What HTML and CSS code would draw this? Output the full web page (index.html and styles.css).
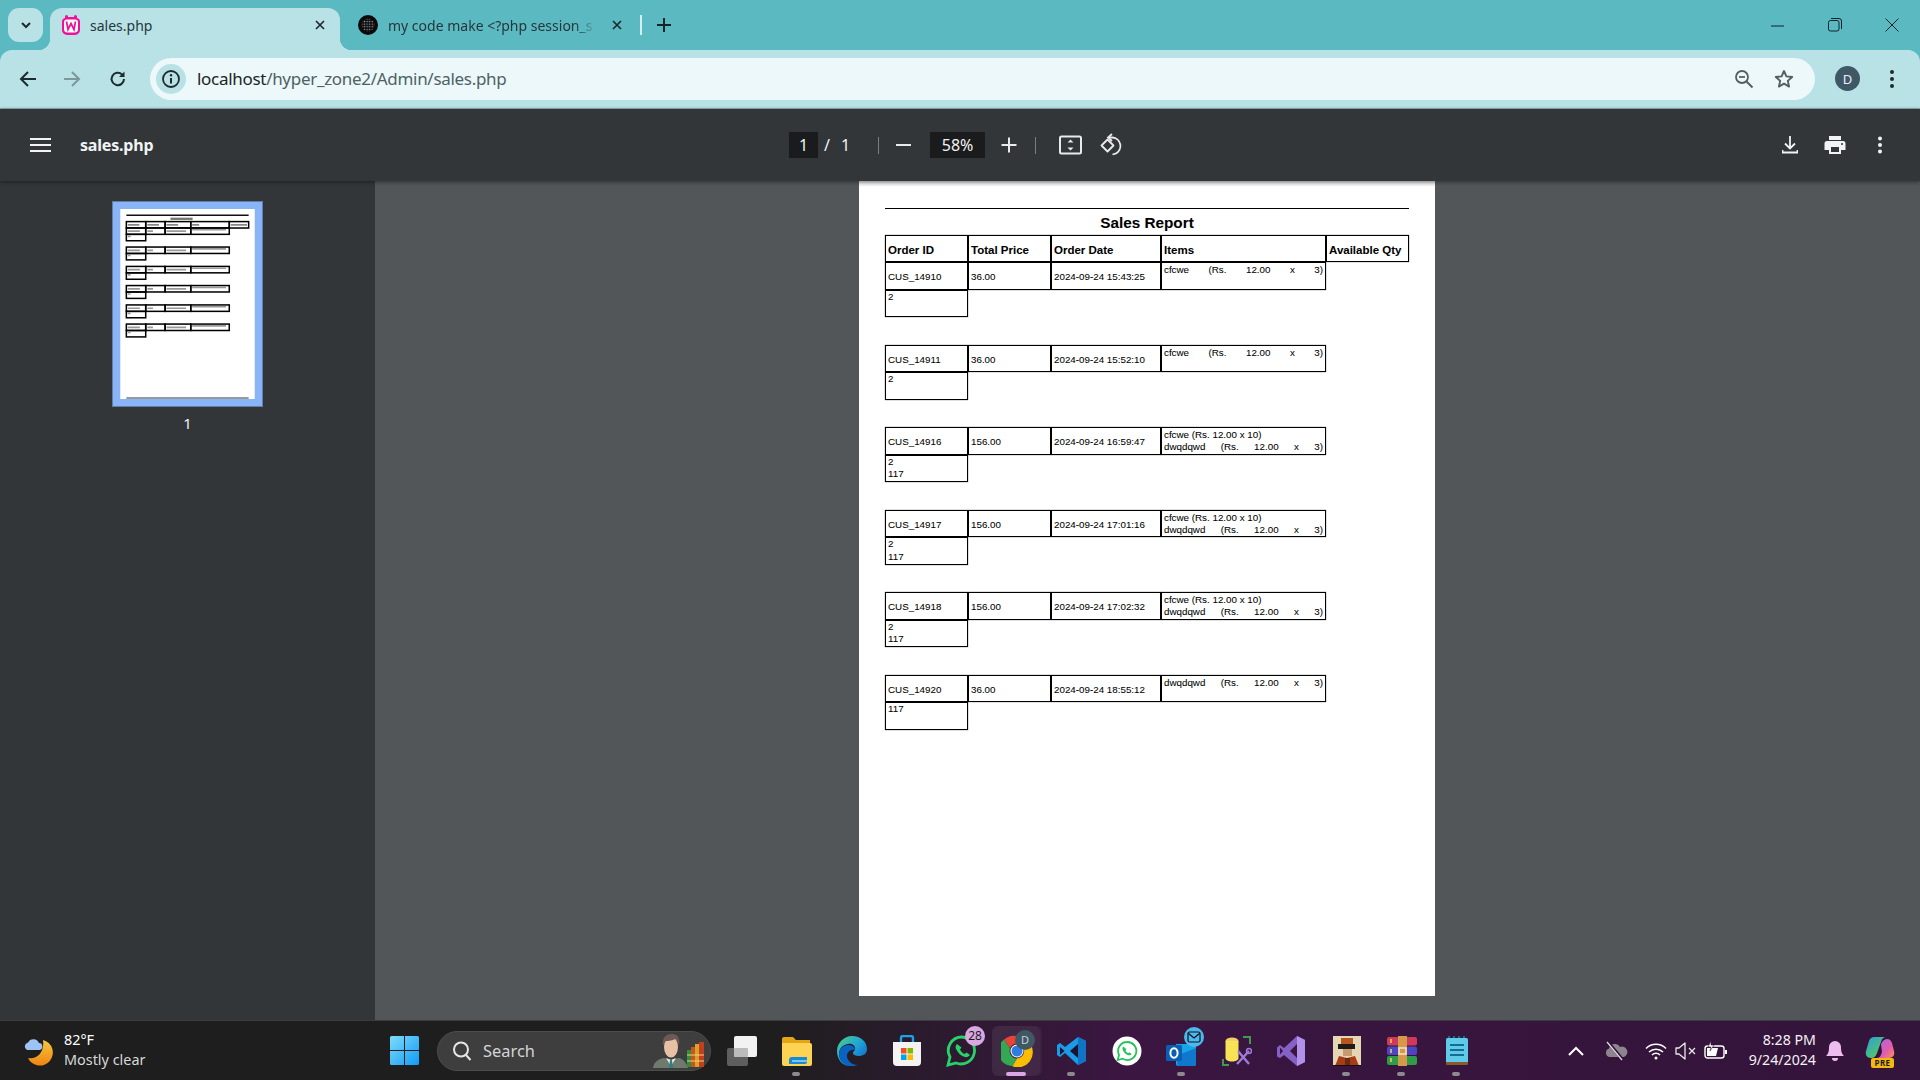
FILE: index.html
```html
<!DOCTYPE html>
<html lang="en">
<head>
<meta charset="utf-8">
<title>sales.php</title>
<link rel="stylesheet" href="styles.css">
</head>
<body>
<div class="window">
  <header class="tabstrip">
    <button class="tab-search"><svg width="14" height="14" viewBox="0 0 14 14"><path d="M3 5l4 4 4-4" fill="none" stroke="#1d2b2e" stroke-width="2"/></svg></button>
    <div class="tab tab-active">
      <svg class="favicon" width="20" height="22" viewBox="0 0 20 22"><path d="M4 4V2.500a1.500 1.500 0 0 1 3 0V3h6v-.5a1.500 1.500 0 0 1 3 0V4a4 4 0 0 1 3 4v8a5 5 0 0 1-5 5H6a5 5 0 0 1-5-5V8a4 4 0 0 1 3-4z" fill="#f0109a"/><path d="M6 5.500h8a3 3 0 0 1 3 3V15a3.500 3.500 0 0 1-3.500 3.500h-7A3.500 3.500 0 0 1 3 15V8.500a3 3 0 0 1 3-3z" fill="#fff"/><path d="M5.500 7.500l1.500 8 3-6 3 6 1.500-8" fill="none" stroke="#f0109a" stroke-width="1.700"/></svg>
      <span class="tab-title">sales.php</span>
      <svg class="tab-x" width="12" height="12" viewBox="0 0 12 12"><path d="M2 2l8 8M10 2l-8 8" stroke="#1d2b2e" stroke-width="1.700"/></svg>
    </div>
    <div class="tab tab-idle">
      <svg class="favicon" width="20" height="20" viewBox="0 0 20 20"><defs><pattern id="dots" width="2.600" height="2.600" patternUnits="userSpaceOnUse"><circle cx="1.300" cy="1.300" r=".75" fill="#9a9a9a"/></pattern></defs><circle cx="10" cy="10" r="10" fill="#0a0a0a"/><circle cx="10" cy="10" r="6.500" fill="url(#dots)"/></svg>
      <span class="tab-title tab-fade">my code make &lt;?php session_s</span>
      <svg class="tab-x" width="12" height="12" viewBox="0 0 12 12"><path d="M2 2l8 8M10 2l-8 8" stroke="#1d2b2e" stroke-width="1.700"/></svg>
    </div>
    <span class="tab-sep"></span>
    <svg class="tab-new" width="16" height="16" viewBox="0 0 16 16"><path d="M8 1v14M1 8h14" stroke="#12262a" stroke-width="2"/></svg>
    <div class="winctl">
      <svg width="14" height="14" viewBox="0 0 14 14"><path d="M0 8h13" stroke="#10222a" stroke-width="1"/></svg>
      <svg width="14" height="14" viewBox="0 0 14 14"><rect x=".5" y="2.500" width="10.500" height="10.500" rx="2" fill="none" stroke="#10222a"/><path d="M3 .5h8a2.500 2.500 0 0 1 2.500 2.500v8" fill="none" stroke="#10222a"/></svg>
      <svg width="14" height="14" viewBox="0 0 14 14"><path d="M.5.500l13 13M13.500.500l-13 13" stroke="#10222a" stroke-width="1"/></svg>
    </div>
  </header>

  <nav class="toolbar">
    <button class="nav"><svg width="20" height="20" viewBox="0 0 20 20"><path d="M18 10H3M10 3l-7 7 7 7" fill="none" stroke="#1d2b2e" stroke-width="2"/></svg></button>
    <button class="nav"><svg width="20" height="20" viewBox="0 0 20 20"><path d="M2 10h15M10 3l7 7-7 7" fill="none" stroke="#7f979b" stroke-width="2"/></svg></button>
    <button class="nav nav-reload"><svg width="20" height="20" viewBox="0 0 20 20"><path d="M16 10a6.200 6.200 0 1 1-2-4.600" fill="none" stroke="#1d2b2e" stroke-width="2"/><path d="M16.500 2.500v5.500h-5.500z" fill="#1d2b2e"/></svg></button>
    <div class="omnibox">
      <span class="info"><svg width="20" height="20" viewBox="0 0 20 20"><circle cx="10" cy="10" r="8" fill="none" stroke="#1d2b2e" stroke-width="1.800"/><path d="M10 9v5.500" stroke="#1d2b2e" stroke-width="2"/><circle cx="10" cy="6.300" r="1.200" fill="#1d2b2e"/></svg></span>
      <span class="url"><span class="url-host">localhost</span>/hyper_zone2/Admin/sales.php</span>
      <svg class="omni-zoom" width="20" height="20" viewBox="0 0 20 20"><circle cx="8" cy="8" r="6" fill="none" stroke="#555f62" stroke-width="1.800"/><path d="M5 8h6" stroke="#555f62" stroke-width="1.800"/><path d="M12.500 12.500l6 6" stroke="#555f62" stroke-width="2"/></svg>
      <svg class="omni-star" width="20" height="20" viewBox="0 0 20 20"><path d="M10 2l2.400 5.400 5.800.6-4.400 3.900 1.300 5.700-5.100-3-5.100 3 1.300-5.700L1.800 8l5.800-.6z" fill="none" stroke="#555f62" stroke-width="1.900" stroke-linejoin="round"/></svg>
    </div>
    <span class="avatar">D</span>
    <svg class="chrome-menu" width="6" height="20" viewBox="0 0 6 20"><circle cx="3" cy="3" r="2" fill="#1d2b2e"/><circle cx="3" cy="10" r="2" fill="#1d2b2e"/><circle cx="3" cy="17" r="2" fill="#1d2b2e"/></svg>
  </nav>

  <section class="pdfbar">
    <div class="pdf-left">
      <svg width="22" height="16" viewBox="0 0 22 16"><path d="M0 2h21M0 8h21M0 14h21" stroke="#f1f3f4" stroke-width="2"/></svg>
      <span class="pdf-name">sales.php</span>
    </div>
    <div class="pdf-center">
      <span class="pdf-field pdf-page">1</span>
      <span class="pdf-slash">/</span>
      <span class="pdf-total">1</span>
      <span class="pdf-sep pdf-sep-a"></span>
      <svg class="pdf-minus" width="16" height="16" viewBox="0 0 16 16"><path d="M0 8h15" stroke="#e8eaed" stroke-width="2"/></svg>
      <span class="pdf-field pdf-zoom">58%</span>
      <svg class="pdf-plus" width="16" height="16" viewBox="0 0 16 16"><path d="M8 .5v15M.5 8h15" stroke="#e8eaed" stroke-width="2"/></svg>
      <span class="pdf-sep pdf-sep-b"></span>
      <svg class="pdf-fit" width="24" height="20" viewBox="0 0 24 20"><rect x="1" y="1.500" width="21" height="17" rx="1.500" fill="none" stroke="#e8eaed" stroke-width="2"/><path d="M11.500 4.500l3 3h-6zM11.500 15.500l3-3h-6z" fill="#e8eaed"/></svg>
      <svg class="pdf-rotate" width="24" height="24" viewBox="0 0 24 24"><path d="M8.500 6.500l6 6-6 6-6-6z" fill="none" stroke="#e8eaed" stroke-width="1.800" stroke-linejoin="round"/><path d="M10 4.500h3.500a8.500 8.500 0 0 1 3 16.200l-3 .8" fill="none" stroke="#e8eaed" stroke-width="1.800"/><path d="M13 1l-4 3.500L13 8" fill="none" stroke="#e8eaed" stroke-width="1.800"/></svg>
    </div>
    <div class="pdf-right">
      <svg width="16" height="20" viewBox="0 0 16 20"><path d="M8 1v12M3 8.500l5 5 5-5M.5 15v2.500h15V15" fill="none" stroke="#f1f3f4" stroke-width="1.800"/></svg>
      <svg width="22" height="20" viewBox="0 0 22 20"><path d="M5 1h12v4H5z" fill="#f1f3f4"/><path d="M3 6h16a2.500 2.500 0 0 1 2.500 2.500V15H17v4H5v-4H.5V8.500A2.500 2.500 0 0 1 3 6z" fill="#f1f3f4"/><path d="M7 12h8v5H7z" fill="#323639"/><circle cx="18" cy="9" r="1" fill="#323639"/></svg>
      <svg class="pdf-more" width="6" height="18" viewBox="0 0 6 18"><circle cx="3" cy="2.500" r="2" fill="#f1f3f4"/><circle cx="3" cy="9" r="2" fill="#f1f3f4"/><circle cx="3" cy="15.500" r="2" fill="#f1f3f4"/></svg>
    </div>
  </section>

  <main class="viewer">
    <aside class="sidebar">
      <div class="thumb">
        <svg width="135" height="190" viewBox="0 0 576 814">
          <defs>
            <g id="tg" fill="none" stroke="#000" stroke-width="6.500">
              <rect x="26" y="0" width="83" height="27.500"/><rect x="109" y="0" width="83" height="27.500"/><rect x="192" y="0" width="110" height="27.500"/><rect x="302" y="0" width="165" height="27.500"/><rect x="26" y="27.500" width="83" height="27.500"/>
              <path d="M32 14h52M116 14h24M198 14h84M308 8h145M32 36h12" stroke="#999" stroke-width="7"/>
            </g>
          </defs>
          <rect width="576" height="814" fill="#fff"/>
          <path d="M26 27h524" stroke="#111" stroke-width="6"/>
          <path d="M215 42h95" stroke="#777" stroke-width="10"/>
          <path d="M26 810h524" stroke="#777" stroke-width="6"/>
          <g fill="none" stroke="#000" stroke-width="6.500"><rect x="26" y="54" width="83" height="27.500"/><rect x="109" y="54" width="83" height="27.500"/><rect x="192" y="54" width="110" height="27.500"/><rect x="302" y="54" width="165" height="27.500"/><rect x="467" y="54" width="83" height="27.500"/><path d="M32 68h50M116 68h50M198 68h50M308 68h30M473 68h70" stroke="#888" stroke-width="8"/></g>
          <use href="#tg" y="81"/><use href="#tg" y="163"/><use href="#tg" y="246"/><use href="#tg" y="328"/><use href="#tg" y="411"/><use href="#tg" y="493"/>
        </svg>
      </div>
      <span class="thumb-num">1</span>
    </aside>
    <div class="stage">
      <article class="page">
        <hr class="page-rule">
        <h1 class="report-title">Sales Report</h1>
        <div class="grid grid-head">
          <div class="cell th">Order ID</div><div class="cell th">Total Price</div><div class="cell th">Order Date</div><div class="cell th">Items</div><div class="cell th">Available Qty</div>
        </div>

        <div class="grid">
          <div class="cell">CUS_14910</div><div class="cell">36.00</div><div class="cell">2024-09-24 15:43:25</div>
          <div class="cell items"><p class="just">cfcwe (Rs. 12.00 x 3)</p></div>
          <div class="cell qty">2</div>
        </div>
        <div class="grid">
          <div class="cell">CUS_14911</div><div class="cell">36.00</div><div class="cell">2024-09-24 15:52:10</div>
          <div class="cell items"><p class="just">cfcwe (Rs. 12.00 x 3)</p></div>
          <div class="cell qty">2</div>
        </div>
        <div class="grid">
          <div class="cell">CUS_14916</div><div class="cell">156.00</div><div class="cell">2024-09-24 16:59:47</div>
          <div class="cell items"><p>cfcwe (Rs. 12.00 x 10)</p><p class="just">dwqdqwd (Rs. 12.00 x 3)</p></div>
          <div class="cell qty">2<br>117</div>
        </div>
        <div class="grid">
          <div class="cell">CUS_14917</div><div class="cell">156.00</div><div class="cell">2024-09-24 17:01:16</div>
          <div class="cell items"><p>cfcwe (Rs. 12.00 x 10)</p><p class="just">dwqdqwd (Rs. 12.00 x 3)</p></div>
          <div class="cell qty">2<br>117</div>
        </div>
        <div class="grid">
          <div class="cell">CUS_14918</div><div class="cell">156.00</div><div class="cell">2024-09-24 17:02:32</div>
          <div class="cell items"><p>cfcwe (Rs. 12.00 x 10)</p><p class="just">dwqdqwd (Rs. 12.00 x 3)</p></div>
          <div class="cell qty">2<br>117</div>
        </div>
        <div class="grid">
          <div class="cell">CUS_14920</div><div class="cell">36.00</div><div class="cell">2024-09-24 18:55:12</div>
          <div class="cell items"><p class="just">dwqdqwd (Rs. 12.00 x 3)</p></div>
          <div class="cell qty">117</div>
        </div>
      </article>
    </div>
  </main>

  <footer class="taskbar">
    <div class="weather">
      <svg width="30" height="30" viewBox="0 0 30 30"><defs><linearGradient id="moon" x1="0" y1="0" x2="0" y2="1"><stop offset="0" stop-color="#f6c93e"/><stop offset="1" stop-color="#ee8412"/></linearGradient></defs><path d="M17 3a13 13 0 1 1-15 18c8 2 17-5 15-18z" fill="url(#moon)" transform="translate(2 1)"/><path d="M3 14a4 4 0 0 1 1-7.500A6 6 0 0 1 15 7a3.600 3.600 0 0 1 1 7z" fill="#9cc3f4"/></svg>
      <div class="weather-text"><span class="temp">82°F</span><span class="cond">Mostly clear</span></div>
    </div>
    <div class="tb-item tb-start">
      <svg width="29" height="29" viewBox="0 0 29 29"><defs><linearGradient id="win" x1="0" y1="0" x2="1" y2="1"><stop offset="0" stop-color="#7fdcf9"/><stop offset="1" stop-color="#0f9bf5"/></linearGradient></defs><path d="M0 1.500A1.500 1.500 0 0 1 1.500 0H14v14H0zM15 0h12.500A1.500 1.500 0 0 1 29 1.500V14H15zM0 15h14v14H1.500A1.500 1.500 0 0 1 0 27.500zM15 15h14v12.500a1.500 1.500 0 0 1-1.500 1.500H15z" fill="url(#win)"/></svg>
    </div>
    <div class="search">
      <svg width="22" height="22" viewBox="0 0 22 22"><circle cx="10" cy="9.500" r="7" fill="none" stroke="#e6e6e6" stroke-width="2"/><path d="M15 15l4.500 5" stroke="#e6e6e6" stroke-width="2"/></svg>
      <span class="search-label">Search</span>
      <svg class="search-art" width="54" height="34" viewBox="0 0 54 34"><path d="M0 34c1-6 5-9 11-10l7 2 8-2c4 1 7 4 9 10z" fill="#6f7a6c"/><path d="M13 24l5 8 5-8-5 2z" fill="#e8f0f0"/><path d="M17 26h2l1 8h-4z" fill="#2f7f85"/><ellipse cx="18" cy="13" rx="7" ry="10.500" fill="#e8c0a4"/><path d="M10 12C9 3 13 0 19 0s8 4 7 12c-1-4-2-6-4-7-4 2-8 2-9 2-2 1-2 3-3 5z" fill="#6d5a57"/><path d="M34 16h4v17h-4z" fill="#2f8f3f"/><path d="M38 13h4v20h-4z" fill="#c9541e"/><path d="M42 10h4v23h-4z" fill="#d9a02a"/><path d="M46 8h5v25h-5z" fill="#c2401e"/><path d="M34 21h17M34 27h17" stroke="#efd27a"/></svg>
    </div>
    <div class="tb-apps">
      <div class="tb-item"><svg width="30" height="30" viewBox="0 0 30 30"><rect x="0" y="12" width="21" height="18" rx="2" fill="#5e5e5e"/><rect x="7" y="0" width="23" height="21" rx="2" fill="#f2f2f2"/><rect x="7" y="12" width="14" height="9" rx="1" fill="#bbb"/></svg></div>
      <div class="tb-item dot"><svg width="32" height="30" viewBox="0 0 32 30"><path d="M1 3a2 2 0 0 1 2-2h9l3 3h14v6H1z" fill="#e5a414"/><path d="M1 7h28a2 2 0 0 1 2 2v19a2 2 0 0 1-2 2H3a2 2 0 0 1-2-2z" fill="#fcd353"/><path d="M13 21h15v5a2 2 0 0 1-2 2H10v-4a3 3 0 0 1 3-3z" fill="#1689d9" transform="translate(-2 0)"/><path d="M11 25h15" stroke="#9fd7f7" stroke-width="1.500"/></svg></div>
      <div class="tb-item"><svg width="32" height="32" viewBox="0 0 32 32"><defs><linearGradient id="ea" x1="0" y1="0" x2="1" y2="1"><stop offset="0" stop-color="#4cd27f"/><stop offset=".5" stop-color="#1ea3d8"/><stop offset="1" stop-color="#0d56b4"/></linearGradient></defs><path d="M16 1c9 0 15 6 15 13 0 5-4 7-8 7-3 0-6-1-6-3 0-1 1-2 2-3 1-4-3-7-7-6C6 10 3 14 3 19c0 6 5 11 11 12C7 31 1 25 1 16 1 8 8 1 16 1z" fill="url(#ea)"/><path d="M3 19c0-5 4-9 9-9 4 0 7 2 7 5-4-1-8 2-8 6 0 4 4 9 11 9-3 1-5 1-8 1C8 31 3 25 3 19z" fill="#0a63c2"/></svg></div>
      <div class="tb-item"><svg width="30" height="32" viewBox="0 0 30 32"><path d="M9 7V3a2 2 0 0 1 2-2h8a2 2 0 0 1 2 2v4" fill="none" stroke="#1aa3e8" stroke-width="2.400"/><path d="M1 7h28v20a4 4 0 0 1-4 4H5a4 4 0 0 1-4-4z" fill="#f5f3f2"/><rect x="9" y="13" width="5.500" height="5.500" fill="#f25022"/><rect x="15.500" y="13" width="5.500" height="5.500" fill="#7fba00"/><rect x="9" y="19.500" width="5.500" height="5.500" fill="#00a4ef"/><rect x="15.500" y="19.500" width="5.500" height="5.500" fill="#ffb900"/></svg></div>
      <div class="tb-item"><svg width="32" height="34" viewBox="0 0 32 34"><path d="M16 3a13.500 13.500 0 0 0-12 20L2 31l8-2A13.500 13.500 0 1 0 16 3z" fill="none" stroke="#25d366" stroke-width="2.800"/><path d="M11 10c-1 1-2 3-1 5 2 4 5 7 9 8 2 .5 4-.5 5-2l-3.500-2.500-2 1.500c-2-1-3.500-2.500-4.500-4.500l1.500-2z" fill="#25d366"/></svg><span class="badge">28</span></div>
      <div class="tb-item active"><svg class="chrome-icon" width="32" height="32" viewBox="0 0 32 32"><path d="M16 1a15 15 0 0 1 13 7.500H16a7.500 7.500 0 0 0-7 4.800L3 4.500A15 15 0 0 1 16 1z" fill="#ea4335"/><path d="M3 4.500l6 9a7.500 7.500 0 0 0 7 10l-4.500 7.800A15 15 0 0 1 3 4.500z" fill="#34a853"/><path d="M29 8.500A15 15 0 0 1 11.500 31.300L16 23.500A7.500 7.500 0 0 0 22 12z" fill="#fbbc04"/><circle cx="16" cy="16" r="6.500" fill="#fff"/><circle cx="16" cy="16" r="5.500" fill="#2f7de1"/></svg><span class="chrome-d">D</span></div>
      <div class="tb-item dot"><svg width="30" height="30" viewBox="0 0 30 30"><path d="M21 1l8 4v20l-8 4-13-12-5 4-3-2v-10l3-2 5 4z" fill="#1a9be6"/><path d="M21 1l8 4v20l-8 4z" fill="#0f74c4"/><path d="M21 8l-8 7 8 7z" fill="#1d1130"/><path d="M3 11l4.500 4L3 19z" fill="#1d1130"/></svg></div>
      <div class="tb-item"><svg width="30" height="30" viewBox="0 0 30 30"><ellipse cx="15" cy="15" rx="14.500" ry="14.500" fill="#fff"/><path d="M15 6a9 9 0 0 0-8 13l-1.300 5 5-1.300A9 9 0 1 0 15 6z" fill="none" stroke="#25c15b" stroke-width="1.800"/><path d="M11.500 10.500c-1 .7-1.300 2-.7 3.500 1 2.500 3 4.500 5.700 5.200 1.300.3 2.500-.3 3.100-1.300l-2.200-1.600-1.200.9c-1.200-.6-2.200-1.600-2.800-2.800l.9-1.200z" fill="#25c15b"/></svg></div>
      <div class="tb-item dot"><svg width="32" height="30" viewBox="0 0 32 30"><path d="M10 8h20v20a2 2 0 0 1-2 2H12a2 2 0 0 1-2-2z" fill="#17a5e6"/><path d="M10 20l20-8v16a2 2 0 0 1-2 2H12z" fill="#0f78cc"/><rect x="0" y="9" width="16" height="16" rx="1.500" fill="#0a5fb4"/><ellipse cx="8" cy="17" rx="3.600" ry="4.800" fill="none" stroke="#fff" stroke-width="2"/></svg><span class="mail-badge"><svg width="14" height="12" viewBox="0 0 14 12"><rect x="1" y="1" width="12" height="10" rx="1.500" fill="none" stroke="#111" stroke-width="1.200"/><path d="M1.500 2.500L7 7l5.500-4.500" fill="none" stroke="#111" stroke-width="1.200"/></svg></span></div>
      <div class="tb-item"><svg width="30" height="30" viewBox="0 0 30 30"><ellipse cx="10" cy="5" rx="6.500" ry="3.500" fill="#f2d264"/><path d="M3.500 5h13v17c0 2-3 3.500-6.500 3.500S3.500 24 3.500 22z" fill="#f8e255"/><path d="M21 1h7v7M1 23v6h6" fill="none" stroke="#3f9a4a" stroke-width="2"/><path d="M15 28l12-13M27 28L16 15" stroke="#9d7bd8" stroke-width="2.400"/><circle cx="27" cy="15" r="2.500" fill="none" stroke="#9d7bd8" stroke-width="1.500"/></svg></div>
      <div class="tb-item"><svg width="30" height="32" viewBox="0 0 30 32"><path d="M20 1l8 4v22l-8 4-13-11-4 3-3-1.500v-9L3 10l4 3z" fill="#8661c5"/><path d="M20 1l8 4v22l-8 4z" fill="#b292e8"/><path d="M20 9l-7 7 7 7z" fill="#3a1540"/><path d="M3 12.500L6 16l-3 3.500z" fill="#3a1540"/></svg></div>
      <div class="tb-item dot"><svg width="28" height="30" viewBox="0 0 28 30"><rect width="28" height="30" fill="#e5d6b4"/><path d="M8 2h12v8H8z" fill="#b8561f"/><path d="M5 8h17v5H5z" fill="#201a18"/><path d="M10 13h9v7h-9z" fill="#c79b6d"/><path d="M2 30l4-10 8 2 8-2 4 10z" fill="#a93c16"/><path d="M12 22h5v8h-5z" fill="#6a2a12"/><path d="M0 29h28v1H0z" fill="#111"/></svg></div>
      <div class="tb-item dot"><svg width="30" height="30" viewBox="0 0 30 30"><rect x="0" y="1" width="30" height="8.500" rx="2" fill="#cf3a5c"/><rect x="0" y="10.500" width="30" height="8.500" rx="2" fill="#4c45c4"/><rect x="0" y="20" width="30" height="9" rx="2" fill="#2f9c47"/><rect x="11" y="0" width="9" height="30" fill="#d39a4b"/><rect x="12" y="12" width="7" height="6" fill="none" stroke="#f6e4c2" stroke-width="1.500"/><path d="M4 3v4M4 13v4M4 22v4" stroke="#f5d35a" stroke-width="1.500"/></svg></div>
      <div class="tb-item dot"><svg width="24" height="30" viewBox="0 0 24 30"><rect x="1" y="2" width="22" height="26" rx="1.500" fill="#5ecbea"/><path d="M1 26h22v2a1 1 0 0 1-1 1H2a1 1 0 0 1-1-1z" fill="#8a5a2b"/><path d="M4 2V0M9 2V0M14 2V0M19 2V0" stroke="#1a6c8c" stroke-width="2"/><path d="M5 9h14M5 14h14M5 19h14" stroke="#166c93" stroke-width="2"/></svg></div>
    </div>
    <div class="tray">
      <svg class="tr-chev" width="20" height="12" viewBox="0 0 20 12"><path d="M3 10l7-7 7 7" fill="none" stroke="#fff" stroke-width="2"/></svg>
      <svg class="tr-cloud" width="24" height="20" viewBox="0 0 24 20"><path d="M5 16a4.500 4.500 0 0 1 0-8.500A6 6 0 0 1 16 6a4.800 4.800 0 0 1 4 10z" fill="#8d8490"/><path d="M4 1l15 18" stroke="#33143a" stroke-width="3"/><path d="M3 1l15 18" stroke="#e6e0e6" stroke-width="1.200"/></svg>
      <svg class="tr-wifi" width="22" height="18" viewBox="0 0 22 18"><path d="M1 6.500a14 14 0 0 1 20 0M4 10a10 10 0 0 1 14 0M7 13a5.500 5.500 0 0 1 8 0" fill="none" stroke="#fff" stroke-width="1.500"/><circle cx="11" cy="16" r="1.500" fill="#fff"/></svg>
      <svg class="tr-mute" width="22" height="18" viewBox="0 0 22 18"><path d="M1 6v6h3l6 5V1L4 6z" fill="none" stroke="#e8e8e8" stroke-width="1.300" stroke-linejoin="round"/><path d="M14 6l6 6M20 6l-6 6" stroke="#e8e8e8" stroke-width="1.300"/></svg>
      <svg class="tr-batt" width="24" height="20" viewBox="0 0 24 20"><rect x="1" y="5" width="19" height="12" rx="2.500" fill="none" stroke="#fff" stroke-width="1.400"/><path d="M3 7h11l-2 8H3z" fill="#fff"/><path d="M21 9h2v4h-2z" fill="#fff"/><path d="M7 0L4 6h3l-1 4 4-6H7z" fill="#fff" stroke="#33143a" stroke-width=".6"/></svg>
      <div class="clock"><span>8:28 PM</span><span>9/24/2024</span></div>
      <svg class="tr-bell" width="20" height="22" viewBox="0 0 20 22"><path d="M10 1a6 6 0 0 1 6 6c0 5 1 7 3 9H1c2-2 3-4 3-9a6 6 0 0 1 6-6z" fill="#eebdf0"/><path d="M7 18h6a3 3 0 0 1-6 0z" fill="#eebdf0"/></svg>
      <div class="copilot">
        <svg width="30" height="24" viewBox="0 0 30 24"><defs><linearGradient id="cpa" x1="0" y1="0" x2="1" y2="1"><stop offset="0" stop-color="#2e9bdc"/><stop offset=".6" stop-color="#4bc07c"/><stop offset="1" stop-color="#e9d13e"/></linearGradient><linearGradient id="cpb" x1="0" y1="0" x2="1" y2="1"><stop offset="0" stop-color="#9c6ce0"/><stop offset=".6" stop-color="#e45bb0"/><stop offset="1" stop-color="#f49a4a"/></linearGradient></defs><path d="M9 1h13c-4 0-5 2-6 5l-4 11c-1 3-3 5-6 5-4 0-6-3-5-7L4 5c1-3 3-4 5-4z" fill="url(#cpa)"/><path d="M16 8c1-2 3-5 6-5 3 0 4 2 5 4l2 8c1 4-1 7-5 7H12c3 0 4-3 5-6z" fill="url(#cpb)"/></svg>
        <span class="pre">PRE</span>
      </div>
    </div>
  </footer>
</div>
</body>
</html>
```

FILE: styles.css
```css
* { box-sizing: border-box; }
html, body { margin: 0; padding: 0; }
body { width: 1920px; height: 1080px; overflow: hidden; font-family: "Noto Sans", "Open Sans", sans-serif; }
button { border: 0; background: none; padding: 0; }
svg { display: block; flex: none; }
p { margin: 0; }

.window { display: flex; flex-direction: column; height: 1080px; background: #5bb9c1; }

/* tab strip */
.tabstrip { display: flex; align-items: flex-end; height: 50px; flex: none; padding-left: 8px; }
.tab-search { width: 35px; height: 34px; margin-bottom: 8px; background: #b8e2e6; border-radius: 11px; display: flex; align-items: center; justify-content: center; }
.tab { height: 42px; display: flex; align-items: center; position: relative; padding-bottom: 8px; }
.tab-active { width: 290px; margin-left: 7px; padding-left: 11px; padding-right: 14px; background: #b8e2e6; border-radius: 12px 12px 0 0; }
.tab-active::before, .tab-active::after { content: ""; position: absolute; bottom: 0; width: 12px; height: 12px; }
.tab-active::before { left: -12px; background: radial-gradient(circle at 0 0, transparent 12px, #b8e2e6 12.5px); }
.tab-active::after { right: -12px; background: radial-gradient(circle at 100% 0, transparent 12px, #b8e2e6 12.5px); }
.tab-idle { width: 300px; padding-left: 18px; padding-right: 17px; }
.tab-title { font-size: 14px; color: #26373b; margin-left: 9px; white-space: nowrap; }
.tab-idle .tab-title { margin-left: 10px; }
.tab-fade { width: 208px; overflow: hidden; -webkit-mask-image: linear-gradient(90deg, #000 90%, transparent); mask-image: linear-gradient(90deg, #000 90%, transparent); }
.tab-x { margin-left: auto; }
.tab-sep { width: 2px; height: 20px; margin: 0 0 15px 0; background: #d6eef0; }
.tab-new { margin: 0 0 17px 14px; }
.winctl { display: flex; gap: 43px; margin: 0 21px 18px auto; align-self: flex-end; }

/* browser toolbar */
.toolbar { display: flex; align-items: center; flex: none; height: 59px; padding: 0 0 1px 6px; background: #b8e2e6; border-radius: 12px 12px 0 0; border-bottom: 1px solid #8fb0b3; }
.nav { width: 44px; height: 36px; display: flex; align-items: center; justify-content: center; }
.nav-reload { margin-left: 2px; }
.omnibox { display: flex; align-items: center; width: 1665px; height: 42px; margin-left: 10px; padding: 0 21px 0 6px; background: #ecf8f9; border-radius: 21px; }
.info { width: 30px; height: 30px; border-radius: 50%; background: #b8e2e6; display: flex; align-items: center; justify-content: center; }
.url { margin-left: 11px; font-size: 17px; color: #4e6266; letter-spacing: -.3px; }
.url-host { color: #1b2527; }
.omni-zoom { margin-left: auto; }
.omni-star { margin-left: 20px; }
.avatar { width: 25px; height: 25px; margin-left: 20px; border-radius: 50%; background: #3f5866; color: #eef; font-size: 13px; display: flex; align-items: center; justify-content: center; }
.chrome-menu { margin-left: 29px; }

/* pdf toolbar */
.pdfbar { display: flex; align-items: center; flex: none; height: 72px; background: #323639; position: relative; z-index: 2; box-shadow: 0 1px 4px rgba(0, 0, 0, .45); }
.pdf-left { display: flex; align-items: center; width: 789px; padding-left: 30px; }
.pdf-name { margin-left: 28px; font-size: 16px; font-weight: 700; color: #f1f3f4; letter-spacing: -.2px; }
.pdf-center { display: flex; align-items: center; color: #f1f3f4; font-size: 16px; }
.pdf-field { height: 26px; background: #191b1c; display: flex; align-items: center; justify-content: center; }
.pdf-page { width: 29px; }
.pdf-slash { margin-left: 6px; }
.pdf-total { margin-left: 11px; }
.pdf-sep { width: 1px; height: 17px; background: #7b7e81; }
.pdf-sep-a { margin-left: 28px; }
.pdf-minus { margin-left: 17px; }
.pdf-zoom { width: 55px; margin-left: 18px; }
.pdf-plus { margin-left: 16px; }
.pdf-sep-b { margin-left: 18px; }
.pdf-fit { margin-left: 23px; }
.pdf-rotate { margin-left: 16px; }
.pdf-right { display: flex; align-items: center; gap: 26px; margin-left: auto; padding-right: 37px; }
.pdf-more { margin-left: 5px; }

/* viewer */
.viewer { display: flex; flex: 1; min-height: 0; background: #525659; }
.sidebar { width: 375px; flex: none; background: #323639; display: flex; flex-direction: column; align-items: flex-start; padding: 20px 0 0 112px; }
.thumb { width: 151px; height: 206px; padding: 8px; background: #8ab4f8; border: 1px solid #5f7fa8; }
.thumb svg { margin: -1px; }
.thumb-num { width: 151px; margin-top: 6px; text-align: center; color: #f1f3f4; font-size: 15px; }
.stage { flex: 1; display: flex; justify-content: flex-start; padding: 0 0 0 484px; overflow: hidden; }

/* report page */
.page { width: 576px; height: 815px; background: #fff; padding: 27px 26px 0; font-family: "Liberation Sans", Arial, sans-serif; color: #000; font-size: 9.8px; -webkit-text-stroke: .06px #000; background-image: linear-gradient(#d9d9d9, #fff 6px); }
.page-rule { margin: 0; height: 1px; border: 0; background: #000; }
.report-title { margin: 0; height: 26px; font-size: 15.300px; line-height: 27px; text-align: center; font-weight: 700; }
.grid { display: grid; grid-template-columns: 83px 83px 110px 165px 83px; grid-template-rows: 27.5px 27.5px; margin-bottom: 27.5px; }
.grid-head { grid-template-rows: 27px; margin-bottom: 0; }
.cell { border: 1px solid #000; padding: 2px 2px 0; display: flex; align-items: center; white-space: nowrap; overflow: hidden; box-shadow: 0 0 1px rgba(0, 0, 0, .75); }
.th { font-size: 11.500px; font-weight: 700; }
.items { display: block; padding: 1px 2px 0; line-height: 12px; white-space: normal; grid-column: 4; }
.just { text-align: justify; text-align-last: justify; }
.qty { display: block; grid-column: 1; padding-top: 0; line-height: 12.500px; }

/* taskbar */
.taskbar { display: flex; align-items: center; flex: none; height: 60px; background: linear-gradient(90deg, #1e1e1e 0, #1e1e1e 40%, #3a1640 58%, #33143a 100%); border-top: 1px solid #3c3c3f; color: #fff; }
.weather { display: flex; align-items: center; width: 377px; padding-left: 24px; }
.weather-text { display: flex; flex-direction: column; margin-left: 10px; padding-bottom: 2px; font-size: 14.400px; line-height: 20px; }
.temp { color: #fff; }
.cond { color: #d8d8d8; }
.tb-item { width: 55px; height: 50px; flex: none; display: flex; align-items: center; justify-content: center; position: relative; }
.tb-start { width: 55px; }
.search { display: flex; align-items: center; width: 274px; height: 40px; margin-left: 5px; padding: 0 3px 0 13px; border-radius: 20px; background: #3e3e3e; border: 1px solid #4c4c4c; }
.search-label { margin-left: 10px; font-size: 16.400px; color: #d4d4d4; }
.search-art { margin-left: auto; }
.tb-apps { display: flex; margin-left: 3px; }
.dot::after { content: ""; position: absolute; left: 23px; bottom: 0; width: 8px; height: 4px; border-radius: 2px; background: #8b8b8f; }
.active::before { content: ""; position: absolute; left: 3px; top: 0; width: 48px; height: 50px; background: rgba(255, 255, 255, .07); border-radius: 6px; box-shadow: 2px 0 0 rgba(255, 255, 255, .04); }
.active::after { content: ""; position: absolute; left: 17px; bottom: 0; width: 20px; height: 4px; border-radius: 2px; background: #dca6e6; }
.chrome-icon { position: relative; }
.badge { position: absolute; left: 31px; top: 0; width: 20px; height: 20px; border-radius: 50%; background: #d9a8e3; color: #1b1b1b; font-size: 12px; display: flex; align-items: center; justify-content: center; }
.chrome-d { position: absolute; left: 26px; top: 4px; width: 20px; height: 20px; border-radius: 50%; background: #3f5866; color: #c8d0d6; font-size: 11px; display: flex; align-items: center; justify-content: center; }
.mail-badge { position: absolute; left: 30px; top: 1px; width: 20px; height: 20px; border-radius: 50%; background: #4cb8f0; display: flex; align-items: center; justify-content: center; }
.tray { display: flex; align-items: center; margin-left: auto; padding-right: 25px; }
.tr-cloud { margin-left: 18px; }
.tr-wifi { margin-left: 17px; }
.tr-mute { margin-left: 8px; }
.tr-batt { margin-left: 7px; }
.clock { display: flex; flex-direction: column; align-items: flex-end; width: 70px; margin-left: 18px; padding-bottom: 2px; font-size: 14.200px; line-height: 20px; white-space: nowrap; color: #f5f0f5; }
.tr-bell { margin-left: 9px; }
.copilot { position: relative; width: 30px; height: 30px; margin-left: 20px; }
.pre { position: absolute; left: 6px; bottom: -2px; width: 23px; height: 10px; border-radius: 2px; background: #f2b90f; color: #1a1a1a; font-size: 8px; font-weight: 700; line-height: 10px; text-align: center; letter-spacing: .4px; }
```
